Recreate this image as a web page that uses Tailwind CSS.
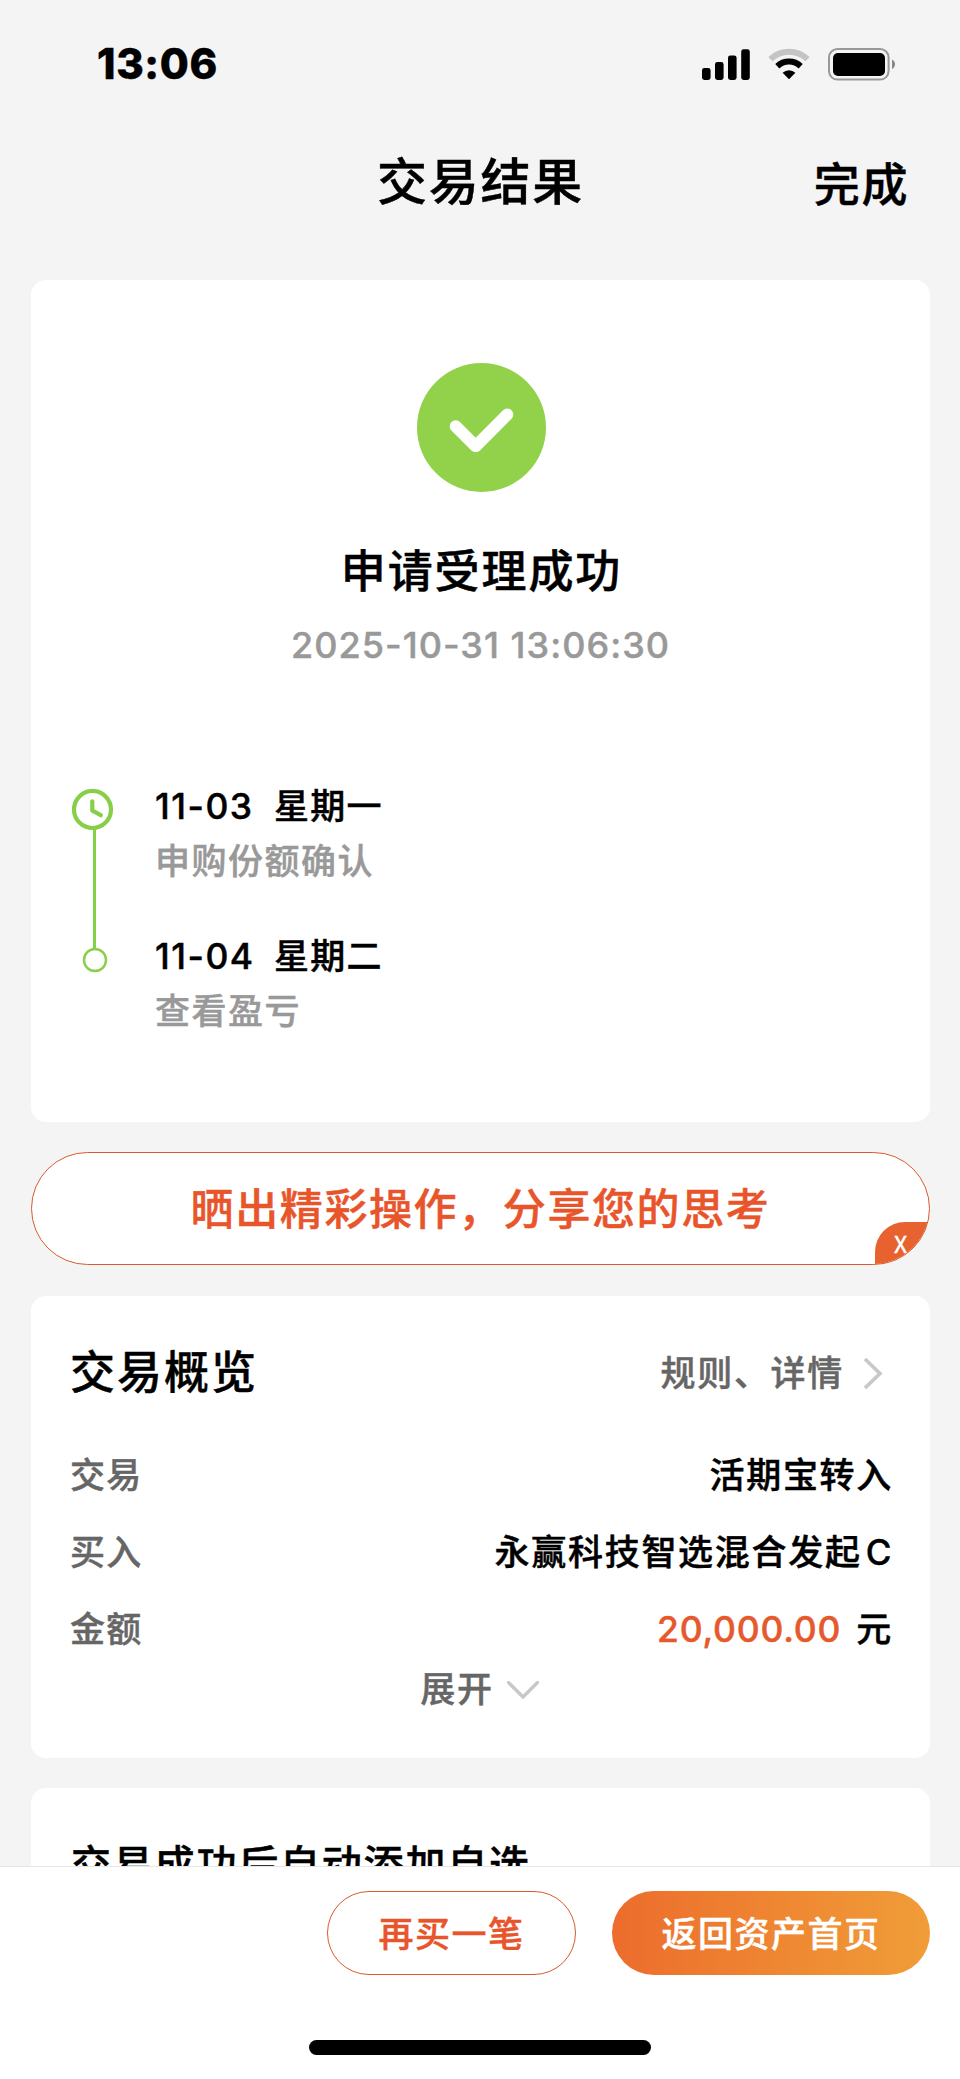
<!DOCTYPE html>
<html lang="zh-Hans">
<head>
    <meta charset="UTF-8">
    <meta name="viewport" content="width=device-width, initial-scale=1.0">
    <title>交易结果</title>
    <!-- 引入 Tailwind CSS -->
    <script src="https://cdn.jsdelivr.net/npm/@tailwindcss/browser@4"></script>
    <style>
        body {
            font-family: 'Inter', 'Noto Sans CJK SC', sans-serif;
            /* 字重略微加粗 */
            -webkit-text-stroke: 0.45px;
        }
    </style>
</head>
<body class="bg-[#f4f4f4] w-[960px] h-[2079px] overflow-hidden flex flex-col text-black font-medium">
    <!-- 状态栏 -->
    <div class="h-32 shrink-0 flex items-center justify-between pl-[97px] pr-[64px]">
        <span class="text-[42px] leading-none font-extrabold tracking-[0.6px]">13:06</span>
        <div class="flex items-center">
            <svg class="w-12 h-[31px] mr-[18px]" viewBox="0 0 48 31">
                <rect x="0" y="19" width="8.6" height="12" rx="2.4" />
                <rect x="13" y="13" width="8.6" height="18" rx="2.4" />
                <rect x="26" y="6.4" width="8.6" height="24.6" rx="2.4" />
                <rect x="39.2" y="0.3" width="8.6" height="30.7" rx="2.4" />
            </svg>
            <svg class="w-[42px] h-8 mr-[18px]" viewBox="0 0 42 32">
                <path d="M2.4 11.2 A27 27 0 0 1 39.6 11.2" fill="none" stroke="#c4c4c4" stroke-width="6" />
                <path d="M9.3 18.2 A17 17 0 0 1 32.7 18.2" fill="none" stroke="#000" stroke-width="6" />
                <path d="M21 31.2 L14.6 24.8 A9.2 9.2 0 0 1 27.4 24.8 Z" />
            </svg>
            <svg class="w-[68px] h-[33px]" viewBox="0 0 68 33">
                <rect x="1" y="1" width="59.6" height="30.6" rx="8.5" fill="none" stroke="#999" stroke-width="2" />
                <rect x="5" y="5" width="52" height="23" rx="5" />
                <path d="M64 11.5 C66 12.5 67 14.3 67 16.3 C67 18.3 66 20.1 64 21.1 Z" fill="#888" />
            </svg>
        </div>
    </div>

    <!-- 导航栏 -->
    <div class="h-[104px] mb-12 shrink-0 grid grid-cols-[1fr_auto_1fr] items-center pr-[51px] pl-[52px]">
        <span></span>
        <h1 class="pt-[4px] text-[50px] leading-none tracking-[1.8px]">交易结果</h1>
        <span class="justify-self-end pt-[8px] text-[46px] leading-none tracking-[1.6px]">完成</span>
    </div>

    <main class="flex-1 min-h-0 overflow-hidden flex flex-col pl-[31px] pr-[30px]">
        <!-- 受理结果 -->
        <section class="h-[842px] shrink-0 bg-white rounded-[15px] pt-[83px]">
            <div class="flex flex-col items-center">
                <svg class="w-[129px] h-[129px] ml-[2px]" viewBox="0 0 129 129">
                    <circle cx="64.5" cy="64.5" r="64.5" fill="#92d24a" />
                    <path d="M38.7 63.2 L58.7 83.3 L90.3 51.5" fill="none" stroke="#fff" stroke-width="12" stroke-linecap="round" stroke-linejoin="round" />
                </svg>
                <h2 class="mt-[50px] pl-[2px] text-[45px] leading-[60px] tracking-[1.9px]">申请受理成功</h2>
                <p class="mt-[19px] text-[36px] leading-[48px] tracking-[1.05px] text-[#999]">2025-10-31 13:06:30</p>
            </div>

            <!-- 时间轴 -->
            <div class="mt-[113px] ml-[41px] flex">
                <svg class="w-[42px] h-[190px] mt-[7px]" viewBox="0 0 42 190" fill="none" stroke="#86cf47">
                    <circle cx="20.5" cy="20.5" r="18.5" stroke-width="4.2" />
                    <path d="M20.3 12.3 V21.7 L28.8 26.2" stroke-width="4.2" stroke-linecap="round" stroke-linejoin="round" />
                    <path d="M22.5 40 V160" stroke-width="3" />
                    <circle cx="23" cy="171" r="11" stroke-width="2.4" />
                </svg>
                <div class="-mt-[3px] ml-[41px] text-[35px] leading-[55px] tracking-[1.5px]">
                    <div class="flex">
                        <span class="w-[119px] text-[35.5px]">11-03</span>
                        <span class="tracking-[1.2px]">星期一</span>
                    </div>
                    <p class="text-[#999]">申购份额确认</p>
                    <div class="mt-[40px] flex">
                        <span class="w-[119px] text-[35.5px]">11-04</span>
                        <span class="tracking-[1.2px]">星期二</span>
                    </div>
                    <p class="text-[#999]">查看盈亏</p>
                </div>
            </div>
        </section>

        <!-- 分享入口 -->
        <div class="relative mt-[30px] h-[113px] shrink-0 bg-white border border-[#d95a30] rounded-full overflow-hidden flex items-center justify-center pt-[2px] text-[43px] leading-none tracking-[1.6px] text-[#e9552b]">
            晒出精彩操作，分享您的思考
            <span class="absolute right-[-1px] bottom-[-1px] w-[55px] h-[43px] bg-[#e8622f] rounded-tl-[30px] pl-[19px] font-['Noto_Sans_CJK_SC'] font-normal text-[23px] leading-[43px] tracking-normal text-white">X</span>
        </div>

        <!-- 交易概览 -->
        <section class="mt-[31px] h-[462px] shrink-0 bg-white rounded-[15px] pt-[47px] pl-10 pr-[37px] text-[35px] leading-[60px] tracking-[1.7px]">
            <div class="flex items-center">
                <h2 class="-ml-px text-[45px] tracking-[2px]">交易概览</h2>
                <span class="ml-auto text-[#666]">规则、详情</span>
                <svg class="w-5 h-8 ml-[19px] mr-[10px]" viewBox="0 0 20 32">
                    <path d="M2 2 L17 16.5 L2 31" fill="none" stroke="#c8c8c8" stroke-width="3.6" />
                </svg>
            </div>
            <div class="mt-[42px] flex justify-between">
                <span class="-ml-px text-[#666] tracking-[1.2px]">交易</span>
                <span>活期宝转入</span>
            </div>
            <div class="mt-[17px] flex justify-between">
                <span class="-ml-px text-[#666] tracking-[1.2px]">买入</span>
                <span>永赢科技智选混合发起<span class="ml-[4px]">C</span></span>
            </div>
            <div class="mt-[17px] flex justify-between">
                <span class="-ml-px text-[#666] tracking-[1.2px]">金额</span>
                <span><span class="text-[#e6592d] text-[35.5px] tracking-[0.8px]">20,000.00</span><span class="ml-[15px]">元</span></span>
            </div>
            <div class="-mt-px flex items-center justify-center pr-[5px] text-[#666]">
                <span>展开</span>
                <svg class="w-8 h-[18px] mt-[2px] ml-[13px]" viewBox="0 0 32 18">
                    <path d="M1.5 1.5 L16 16 L30.5 1.5" fill="none" stroke="#c8c8c8" stroke-width="3.4" stroke-linecap="round" />
                </svg>
            </div>
        </section>

        <section class="mt-[30px] h-[200px] shrink-0 bg-white rounded-[15px] pt-[47px] pl-10">
            <h2 class="text-[40px] leading-[60px] tracking-[1.8px]">交易成功后自动添加自选</h2>
        </section>
    </main>

    <!-- 底部操作栏 -->
    <footer class="h-[213px] shrink-0 bg-white border-t border-[#e6e6e6] flex flex-col items-center">
        <div class="mt-6 w-full pr-[30px] flex justify-end gap-9 text-[35px] leading-none tracking-[1.5px]">
            <button class="w-[249px] h-[84px] pt-[2px] rounded-full border border-[#d95a30] text-[#e9552b]">再买一笔</button>
            <button class="w-[318px] h-[84px] pt-[2px] rounded-full bg-linear-to-r from-[#ec6c2c] to-[#f09d38] text-white">返回资产首页</button>
        </div>
        <div class="mt-[65px] w-[342px] h-[15px] rounded-full bg-black"></div>
    </footer>
</body>
</html>
